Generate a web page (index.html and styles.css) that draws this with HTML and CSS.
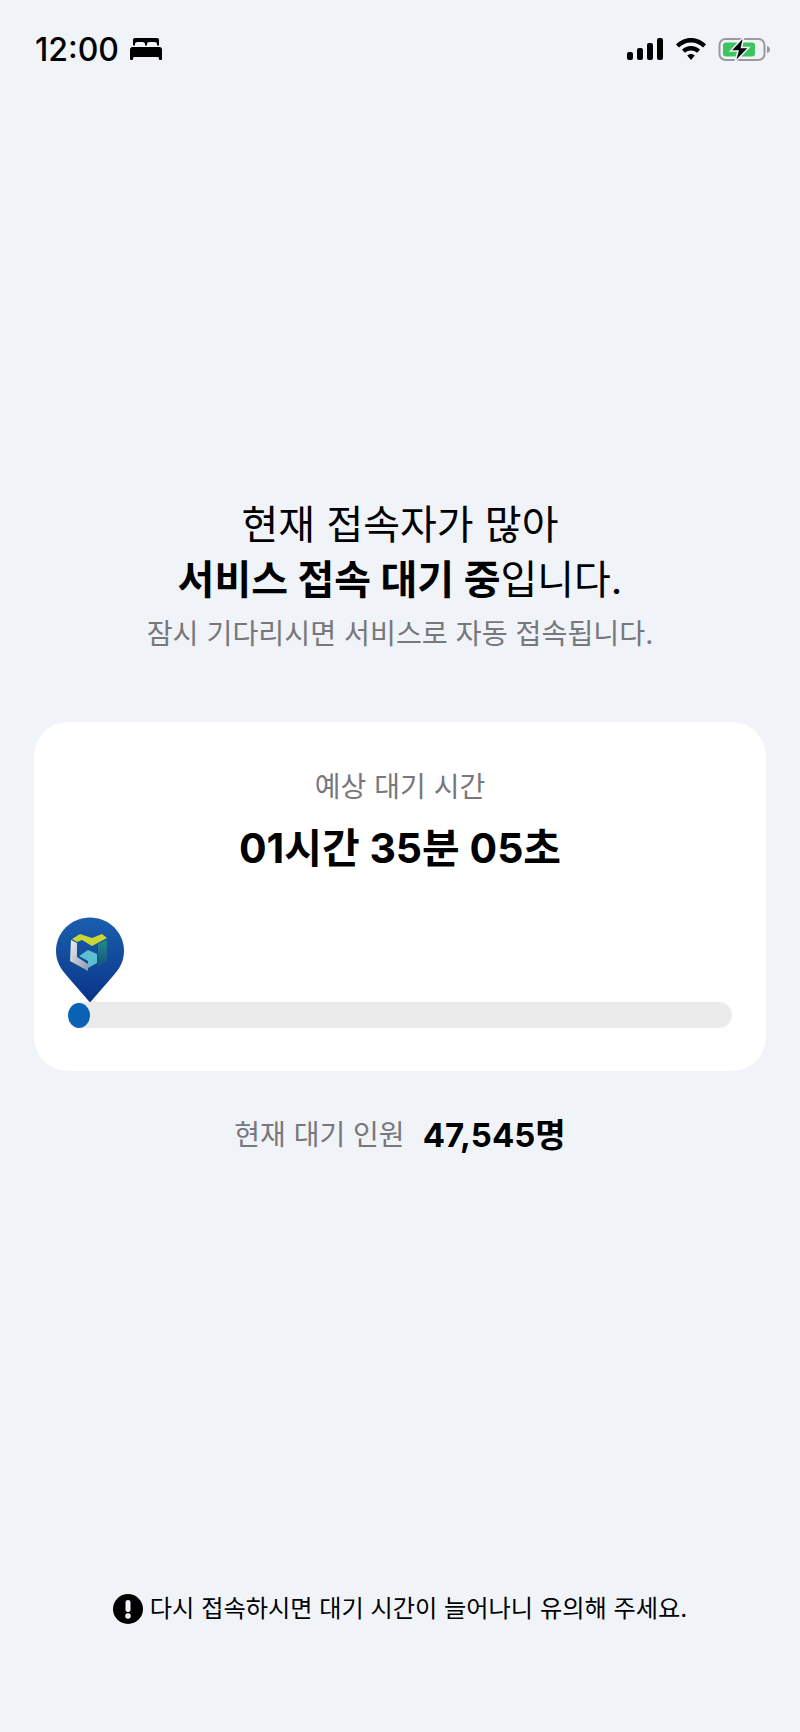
FILE: index.html

```html
<!DOCTYPE html>
<html lang="ko">
  <head>
    <meta charset="utf-8">
    <title>서비스 접속 대기</title>
    <link rel="stylesheet" href="styles.css">
  </head>
  <body>
    <div class="status-bar">
      <div class="status-left">
        <span class="clock">12:00</span>
        <svg class="bed-icon" width="34" height="22" viewBox="0 0 34 22">
          <path fill="#000" d="M4 1.5Q4 0 6 0H28Q30 0 30 1.5V7.5H28V6Q28 4 25.5 4H20.5Q18 4 18 6V7.5H16V6Q16 4 13.5 4H8.5Q6 4 6 6V7.5H4ZM3.5 9H30.5Q33 9 33 12V21Q33 22 32 22H31Q30 22 29.8 20.5L29.6 19H4.4L4.2 20.5Q4 22 3 22H2Q1 22 1 21V12Q1 9 3.5 9Z"/>
        </svg>
      </div>
      <div class="status-right">
        <svg width="38" height="24" viewBox="0 0 38 24">
          <rect x="1" y="15" width="6" height="8" rx="2"/>
          <rect x="11" y="11" width="6" height="12" rx="2"/>
          <rect x="21" y="6" width="6" height="17" rx="2"/>
          <rect x="31" y="1" width="6" height="22" rx="2"/>
        </svg>
        <svg width="32" height="24" viewBox="0 0 32 24">
          <path d="M16 1C22 1 27 3.5 31 7.5L28 10.5C25 7.5 21 5.5 16 5.5C11 5.5 7 7.5 4 10.5L1 7.5C5 3.5 10 1 16 1Z"/>
          <path d="M16 9C19.5 9 22.5 10.3 25 12.7L22 15.7C20.3 14.2 18.3 13.4 16 13.4C13.7 13.4 11.7 14.2 10 15.7L7 12.7C9.5 10.3 12.5 9 16 9Z"/>
          <path d="M16 17C17.5 17 18.8 17.6 19.8 18.5L16 23L12.2 18.5C13.2 17.6 14.5 17 16 17Z"/>
        </svg>
        <svg width="52" height="26" viewBox="0 0 52 26">
          <rect x="1.5" y="3" width="45" height="21" rx="6" fill="none" stroke="#9a9a9a" stroke-width="2"/>
          <path fill="#9a9a9a" d="M49 10Q52 11 52 13.5Q52 16 49 17Z"/>
          <rect x="5" y="6.5" width="32" height="14" rx="3" fill="#3ec45c"/>
          <path d="M26 0.5L12.5 15H20L17 26L31 11.5H23.5Z" fill="#000" stroke="#f0f3f8" stroke-width="1.5"/>
        </svg>
      </div>
    </div>

    <div class="notice">
      <p class="notice-line">현재 접속자가 많아</p>
      <p class="notice-line"><b>서비스 접속 대기 중</b>입니다.</p>
      <p class="notice-sub">잠시 기다리시면 서비스로 자동 접속됩니다.</p>
    </div>

    <div class="wait-card">
      <div class="wait-label">예상 대기 시간</div>
      <div class="wait-time">01시간 35분 05초</div>
      <div class="progress">
        <svg class="pin" width="70" height="86" viewBox="0 0 70 86">
          <defs>
            <linearGradient id="pin-fill" x1="0" y1="0" x2="0" y2="1">
              <stop offset="0" stop-color="#1a5fae"/>
              <stop offset="1" stop-color="#0a3488"/>
            </linearGradient>
            <linearGradient id="pin-side" x1="0" y1="0" x2="0" y2="1">
              <stop offset="0" stop-color="#1f8f86"/>
              <stop offset="1" stop-color="#154f84"/>
            </linearGradient>
            <linearGradient id="pin-white" x1="0" y1="0" x2="1" y2="1">
              <stop offset="0" stop-color="#eef0f2"/>
              <stop offset="1" stop-color="#8f98a8"/>
            </linearGradient>
          </defs>
          <path fill="url(#pin-fill)" d="M35 0.5C54 0.5 69 15.5 69 34C69 45 64 52 58 59L35 85.5L12 59C6 52 1 45 1 34C1 15.5 16 0.5 35 0.5Z"/>
          <path fill="url(#pin-white)" d="M16 23L22 26V40L33 47V54L15 44Z"/>
          <path fill="#5bbfd0" d="M24 39L33 33L42 37V46L33 51V44Z"/>
          <path fill="#c9d634" d="M17 22L25 17L37 21L47 17L52 21L37 29L27 23L22 25Z"/>
          <path fill="url(#pin-side)" d="M43 27L52 23V44L43 50Z"/>
        </svg>
        <div class="track"><div class="dot"></div></div>
      </div>
    </div>

    <div class="queue">
      <span class="queue-label">현재 대기 인원</span>
      <span class="queue-count">47,545명</span>
    </div>

    <div class="warning">
      <svg width="30" height="30" viewBox="0 0 30 30">
        <circle cx="15" cy="15" r="15" fill="#000"/>
        <rect x="12.5" y="6" width="5" height="12" rx="2.5" fill="#f0f3f8"/>
        <circle cx="15" cy="22" r="2.8" fill="#f0f3f8"/>
      </svg>
      <span>다시 접속하시면 대기 시간이 늘어나니 유의해 주세요.</span>
    </div>
  </body>
</html>
```

FILE: styles.css

```css
/* Whole page */
html, body {
  margin: 0;
  height: 100%;
}

body {
  display: flex;
  flex-direction: column;
  background: #f0f3f8;
  color: #000;
  font-family: Inter, "Noto Sans CJK KR", sans-serif;
}

/* Phone status bar */
.status-bar {
  display: flex;
  justify-content: space-between;
  align-items: center;
  height: 50px;
  padding: 24px 30px 0 35px;
}

.status-left {
  display: flex;
  align-items: center;
  gap: 10px;
}

.clock {
  font-size: 32px;
  font-weight: 500;
}

.status-right {
  display: flex;
  align-items: center;
  gap: 11px;
}

/* Headline block */
.notice {
  margin-top: 423px;
  text-align: center;
}

.notice-line {
  margin: 0;
  font-size: 40px;
  line-height: 55px;
}

.notice-sub {
  margin: 0;
  font-size: 28.2px;
  line-height: 55px;
  color: #77777c;
}

/* White card with time and progress */
.wait-card {
  margin: 60px 34px 0;
  padding: 0 34px 43px;
  background: #fff;
  border-radius: 34px;
  text-align: center;
}

.wait-label {
  padding-top: 45px;
  font-size: 28px;
  line-height: 40px;
  color: #77777c;
}

.wait-time {
  margin-top: 13px;
  font-size: 41px;
  line-height: 56px;
  font-weight: 700;
}

.progress {
  position: relative;
  margin-top: 41px;
  padding-top: 85px;
}

.pin {
  position: absolute;
  top: 0;
  left: -13px;
}

.track {
  position: relative;
  height: 26px;
  background: #ebebeb;
  border-radius: 13px;
}

.dot {
  position: absolute;
  top: 1px;
  left: 0;
  width: 22px;
  height: 25px;
  background: #0a62b4;
  border-radius: 50%;
}

/* Queue count under the card */
.queue {
  display: flex;
  justify-content: center;
  align-items: center;
  gap: 18px;
  margin-top: 40px;
  line-height: 48px;
}

.queue-label {
  font-size: 28px;
  color: #77777c;
}

.queue-count {
  font-size: 33px;
  font-weight: 700;
}

/* Warning at the bottom */
.warning {
  display: flex;
  justify-content: center;
  align-items: center;
  gap: 7px;
  margin-top: auto;
  margin-bottom: 105px;
  font-size: 24.2px;
  line-height: 36px;
}
```
